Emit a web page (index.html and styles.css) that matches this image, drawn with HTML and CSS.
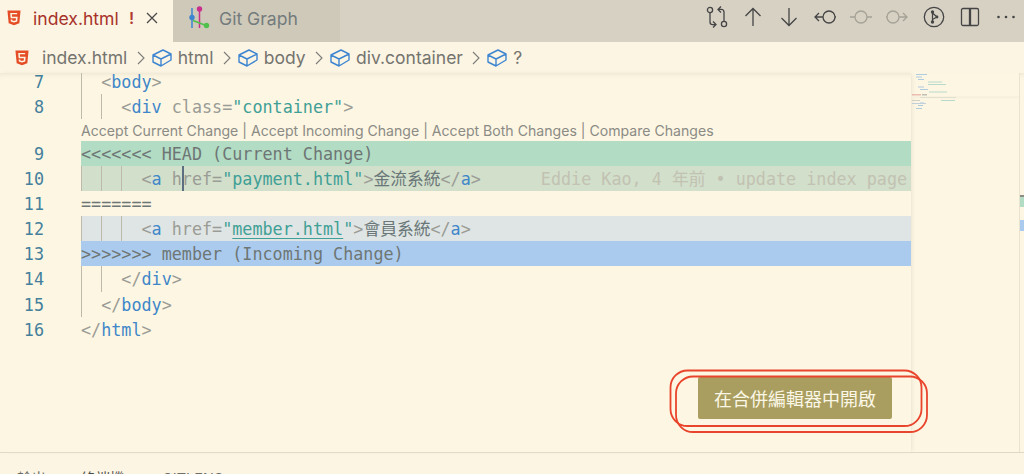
FILE: index.html
```html
<!DOCTYPE html>
<html lang="zh-Hant">
<head>
<meta charset="utf-8">
<title>index.html</title>
<link rel="stylesheet" href="styles.css">
</head>
<body>
<svg width="0" height="0" class="defs">
  <defs>
    <symbol id="html5" viewBox="0 0 16 18">
      <path fill="#e44d26" d="M0.5 0.5h15l-1.4 14.6L8 17.2l-6.1-2.1z"/>
      <path fill="none" stroke="#fdf6e3" stroke-width="1.7" d="M11.6 4H4.6l.35 4.3h6.3l-.4 4L8 13.2l-2.8-.9-.15-1.6"/>
    </symbol>
    <symbol id="cube" viewBox="0 0 20 18">
      <path fill="none" stroke="#3d85d0" stroke-width="1.4" stroke-linejoin="round" d="M1 6 L11 1 L19 5 L19 11 L9 17 L1 13 Z M1 6 L9 10 L19 5 M9 10 V17"/>
    </symbol>
    <symbol id="chev" viewBox="0 0 8 14">
      <path fill="none" stroke="#7b7b78" stroke-width="1.1" d="M1 1l6 6-6 6"/>
    </symbol>
  </defs>
</svg>

<header class="tabbar">
  <div class="tab tab-active">
    <svg class="tab-icon"><use href="#html5"/></svg>
    <span class="tab-title">index.html</span>
    <span class="tab-bang">!</span>
    <svg class="tab-close" viewBox="0 0 12 12"><path d="M1 1l10 10M11 1L1 11"/></svg>
  </div>
  <div class="tab tab-idle">
    <svg class="graph-icon" viewBox="0 0 22 24">
      <path fill="none" stroke="#3d85d0" stroke-width="1.5" d="M3 2v20"/>
      <path fill="none" stroke="#c9308e" stroke-width="1.5" d="M10.500 2v20"/>
      <path fill="none" stroke="#4fc04a" stroke-width="1.5" d="M4 14.500l13 5"/>
      <circle cx="3" cy="11.500" r="2.700" fill="#3d85d0"/>
      <circle cx="10.500" cy="3" r="2.700" fill="#c9308e"/>
      <circle cx="17.500" cy="19.500" r="2.700" fill="#4fc04a"/>
    </svg>
    <span class="tab-title-idle">Git Graph</span>
  </div>
  <div class="toolbar">
    <svg class="tool" viewBox="0 0 22 22"><circle cx="4" cy="4" r="2.600"/><circle cx="18" cy="18" r="2.600"/><path d="M4 6.600v9.400c0 1.600 1 2.600 2.600 2.600h3M7 15.500l3 3-3 3M18 15.400V6c0-1.600-1-2.600-2.600-2.600h-3M15 .5l-3 3 3 3"/></svg>
    <svg class="tool" viewBox="0 0 22 22"><path d="M11 20V2.500M3.500 10L11 2.500 18.500 10"/></svg>
    <svg class="tool" viewBox="0 0 22 22"><path d="M11 2v17.500M3.500 12l7.500 7.500 7.500-7.500"/></svg>
    <svg class="tool" viewBox="0 0 22 22"><circle cx="15" cy="11" r="6"/><path d="M9 11H1M5 7l-4 4 4 4M21 11h1"/></svg>
    <svg class="tool tool-dim" viewBox="0 0 22 22"><circle cx="11" cy="11" r="6"/><path d="M0 11h5M17 11h5"/></svg>
    <svg class="tool tool-dim" viewBox="0 0 22 22"><circle cx="7" cy="11" r="6"/><path d="M0 11h1M13 11h8M17 7l4 4-4 4"/></svg>
    <svg class="tool" viewBox="0 0 22 22"><circle cx="11" cy="11" r="9.700"/><path class="thick" d="M9.500 6v10M9.500 7l4.500 4-4.500 2.500"/><circle class="dot" cx="9.500" cy="6" r="1.700"/><circle class="dot" cx="9.500" cy="16" r="1.700"/><circle class="dot" cx="14" cy="11" r="1.400"/></svg>
    <svg class="tool" viewBox="0 0 22 22"><rect x="2.500" y="2.500" width="17" height="17" rx="1.500"/><path class="thick" d="M10.500 2.500v17M11.500 2.500v17"/></svg>
    <svg class="tool" viewBox="0 0 22 22"><circle class="dot" cx="3.500" cy="11" r="1.300"/><circle class="dot" cx="11" cy="11" r="1.300"/><circle class="dot" cx="18.500" cy="11" r="1.300"/></svg>
  </div>
</header>

<nav class="crumbs">
  <svg class="crumb-file"><use href="#html5"/></svg>
  <span class="crumb crumb-first">index.html</span>
  <svg class="chev"><use href="#chev"/></svg>
  <svg class="cube"><use href="#cube"/></svg>
  <span class="crumb">html</span>
  <svg class="chev"><use href="#chev"/></svg>
  <svg class="cube"><use href="#cube"/></svg>
  <span class="crumb">body</span>
  <svg class="chev"><use href="#chev"/></svg>
  <svg class="cube"><use href="#cube"/></svg>
  <span class="crumb">div.container</span>
  <svg class="chev"><use href="#chev"/></svg>
  <svg class="cube"><use href="#cube"/></svg>
  <span class="crumb">?</span>
</nav>

<main class="editor">
  <section class="pane">
    <div class="lines">
      <div class="row"><span class="num">7</span><code class="code"><i class="g"></i><span class="p">&lt;</span><span class="t">body</span><span class="p">&gt;</span></code></div>
      <div class="row"><span class="num">8</span><code class="code"><i class="g"></i><i class="g"></i><span class="p">&lt;</span><span class="t">div</span> <span class="p">class=</span><span class="s">"container"</span><span class="p">&gt;</span></code></div>
      <div class="lens">Accept Current Change | Accept Incoming Change | Accept Both Changes | Compare Changes</div>
      <div class="row"><span class="num">9</span><code class="code cur-head m">&lt;&lt;&lt;&lt;&lt;&lt;&lt; HEAD (Current Change)</code></div>
      <div class="row"><span class="num">10</span><code class="code cur-body"><i class="g"></i><i class="g"></i><i class="g"></i><span class="p">&lt;</span><span class="t">a</span> <span class="p">h<b class="caret"></b>ref=</span><span class="s">"payment.html"</span><span class="p">&gt;</span><span class="x">金流系統</span><span class="p">&lt;/</span><span class="t">a</span><span class="p">&gt;</span><span class="blame">Eddie Kao, 4 年前 • update index page</span></code></div>
      <div class="row"><span class="num">11</span><code class="code m">=======</code></div>
      <div class="row"><span class="num">12</span><code class="code inc-body"><i class="g"></i><i class="g"></i><i class="g"></i><span class="p">&lt;</span><span class="t">a</span> <span class="p">href=</span><span class="s">"<u>member.html</u>"</span><span class="p">&gt;</span><span class="x">會員系統</span><span class="p">&lt;/</span><span class="t">a</span><span class="p">&gt;</span></code></div>
      <div class="row"><span class="num">13</span><code class="code inc-head m">&gt;&gt;&gt;&gt;&gt;&gt;&gt; member (Incoming Change)</code></div>
      <div class="row"><span class="num">14</span><code class="code"><i class="g"></i><i class="g"></i><span class="p">&lt;/</span><span class="t">div</span><span class="p">&gt;</span></code></div>
      <div class="row"><span class="num">15</span><code class="code"><i class="g"></i><span class="p">&lt;/</span><span class="t">body</span><span class="p">&gt;</span></code></div>
      <div class="row"><span class="num">16</span><code class="code"><span class="p">&lt;/</span><span class="t">html</span><span class="p">&gt;</span></code></div>
    </div>
    <button class="merge">在合併編輯器中開啟</button>
  </section>
  <aside class="minimap">
    <svg class="mini-svg" viewBox="0 0 108 40" width="108" height="40">
      <rect x="0" y="23" width="108" height="2.500" fill="#f5efdc"/>
      <g fill="#8fb9dd">
        <rect x="5" y="1" width="11" height="1"/><rect x="5" y="3.500" width="6" height="1"/><rect x="7" y="6" width="6" height="1"/>
        <rect x="7" y="13.500" width="6" height="1"/><rect x="9" y="16" width="8" height="1"/><rect x="5" y="35" width="6" height="1"/>
        <rect x="7" y="32" width="5" height="1"/><rect x="9" y="29.500" width="4" height="1"/>
      </g>
      <g fill="#9ccfc4">
        <rect x="17" y="8.500" width="14" height="1"/><rect x="17" y="11" width="18" height="1"/><rect x="18" y="18.500" width="18" height="1"/>
        <rect x="23" y="24" width="10" height="1"/><rect x="30" y="27" width="14" height="1"/>
      </g>
      <rect x="1" y="21" width="9" height="1.500" fill="#e6a79c"/>
      <rect x="11" y="21" width="5" height="1.500" fill="#a9a9a3"/>
      <rect x="9" y="24" width="36" height="1" fill="#d8d8c8"/>
      <rect x="1" y="27" width="8" height="1" fill="#bfc1b9"/>
      <rect x="1" y="30" width="14" height="1" fill="#a9c0d8"/>
    </svg>
  </aside>
  <aside class="overview">
    <div class="ov-cursor"></div>
    <div class="ov-green"></div>
    <div class="ov-blue"></div>
  </aside>
</main>

<footer class="panel">
  <span class="panel-a">輸出</span>
  <span class="panel-b">終端機</span>
  <span class="panel-c">GITLENS</span>
</footer>

<svg class="marks" viewBox="0 0 1024 474" width="1024" height="474">
  <rect x="670.500" y="370.500" width="251" height="55.500" rx="17"/>
  <rect x="676" y="376.500" width="251" height="55.500" rx="17"/>
</svg>
</body>
</html>
```
FILE: styles.css
```css
* { box-sizing: border-box; }
html, body { margin: 0; height: 474px; overflow: hidden; }
body {
  width: 1024px;
  background: #fdf6e3;
  font-family: "Inter", "Noto Sans CJK TC", sans-serif;
  display: flex;
  flex-direction: column;
  position: relative;
}
.defs { position: absolute; }

.tabbar { height: 42px; flex: none; display: flex; background: #d7d1c4; }
.tab { height: 42px; display: flex; align-items: center; flex: none; padding-bottom: 6px; }
.tab-active { width: 173px; background: #fcf5e4; padding-left: 7px; }
.tab-icon { width: 14px; height: 16px; margin-right: 12px; flex: none; }
.tab-title { font-size: 17.600px; color: #a7322a; width: 87px; white-space: nowrap; }
.tab-bang { font-size: 16px; font-weight: 600; color: #b23a30; margin-left: 9px; width: 14px; }
.tab-close { width: 12px; height: 12px; margin-left: 3px; fill: none; stroke: #4a4a48; stroke-width: 1.300; }
.tab-idle { width: 167px; background: #cfc9b9; padding-left: 16px; }
.graph-icon { width: 22px; height: 24px; flex: none; }
.tab-title-idle { font-size: 17.600px; color: #737b7c; margin-left: 8px; }

.toolbar { margin-left: auto; display: flex; align-items: center; gap: 14.200px; padding-right: 7px; padding-bottom: 8px; }
.tool { width: 22px; height: 22px; fill: none; stroke: #454545; stroke-width: 1.300; flex: none; }
.tool-dim { stroke: #a5a295; }
.tool .dot { fill: #454545; stroke: none; }
.tool .thick { stroke-width: 1.300; }

.crumbs { height: 31px; flex: none; display: flex; align-items: center; background: #fcf5e4; padding-left: 15px; color: #74746f; }
.crumb-file { width: 14px; height: 16px; flex: none; margin-right: 13px; }
.crumb { font-size: 17.500px; white-space: nowrap; }
.chev { width: 8px; height: 14px; margin: 0 7px 0 9.400px; flex: none; }
.cube { width: 20px; height: 18px; margin-right: 6px; flex: none; }

.editor { height: 379px; flex: none; display: flex; background: #fdf6e3; box-shadow: inset 0 6px 6px -6px #e3ddcb; }
.pane { width: 911px; flex: none; position: relative; overflow: hidden; box-shadow: 2px 0 4px -1px #e9e3d2; }
.lines { margin-top: -4px; }
.row { display: flex; height: 25.080px; overflow: hidden; }
.num {
  width: 81px; flex: none; padding-right: 37px; text-align: right;
  font: 16.750px/26.500px "DejaVu Sans Mono", monospace; color: #44809c;
}
.code {
  flex: 1; min-width: 0; overflow: hidden; white-space: pre; display: block;
  font: 16.750px/26.500px "DejaVu Sans Mono", "Noto Sans CJK TC", monospace; color: #657b83;
}
.g { display: inline-block; width: 20.160px; height: 26.500px; vertical-align: top; border-left: 1px solid #bdb9ab; }
.p { color: #9a9c95; }
.t { color: #3f87c9; }
.s { color: #3fa096; }
.x { color: #6a7778; }
.m { color: #6e7675; }
u { text-decoration-thickness: 1px; text-underline-offset: 3px; }
.cur-head { background: #b2dcc4; }
.cur-body { background: #d2dfcb; }
.inc-head { background: #abcbee; }
.inc-body { background: #dfe5e4; }
.caret { display: inline-block; width: 0; height: 26.500px; vertical-align: top; border-left: 2px solid #5b6f80; margin-right: -2px; }
.blame { color: #c2c2b2; margin-left: 60px; }
.lens { height: 21.900px; padding-left: 81px; font-size: 14.100px; line-height: 24px; color: #8b8b85; white-space: nowrap; }

.merge {
  position: absolute; left: 698px; top: 304px; width: 194px; height: 42px;
  border: 0; border-radius: 2px; background: #a99e5f; color: #fbf7e6;
  font: 18px/42px "Noto Sans CJK TC", sans-serif; padding: 0;
}

.minimap { width: 108px; flex: none; background: #fdf6e3; }
.mini-svg { display: block; opacity: .7; }
.overview { width: 5px; flex: none; border-left: 1px solid #e8e2d0; display: flex; flex-direction: column; padding-top: 122px; }
.ov-cursor { height: 2px; background: #8d8d86; }
.ov-green { height: 10px; background: #b2dcc4; }
.ov-blue { height: 11px; margin-top: 13px; background: #abcbee; }

.panel {
  height: 22px; flex: none; border-top: 1px solid #ded8c6; background: #fcf5e4;
  display: flex; padding-left: 17px; padding-top: 16px; font-size: 14.500px; line-height: 20px; color: #6f6f6a; overflow: hidden;
}
.panel-a { width: 64px; }
.panel-b { width: 81px; color: #4a4a48; }

.marks { position: absolute; left: 0; top: 0; pointer-events: none; }
.marks rect { fill: none; stroke: #e8452c; stroke-width: 1.800; }
```
